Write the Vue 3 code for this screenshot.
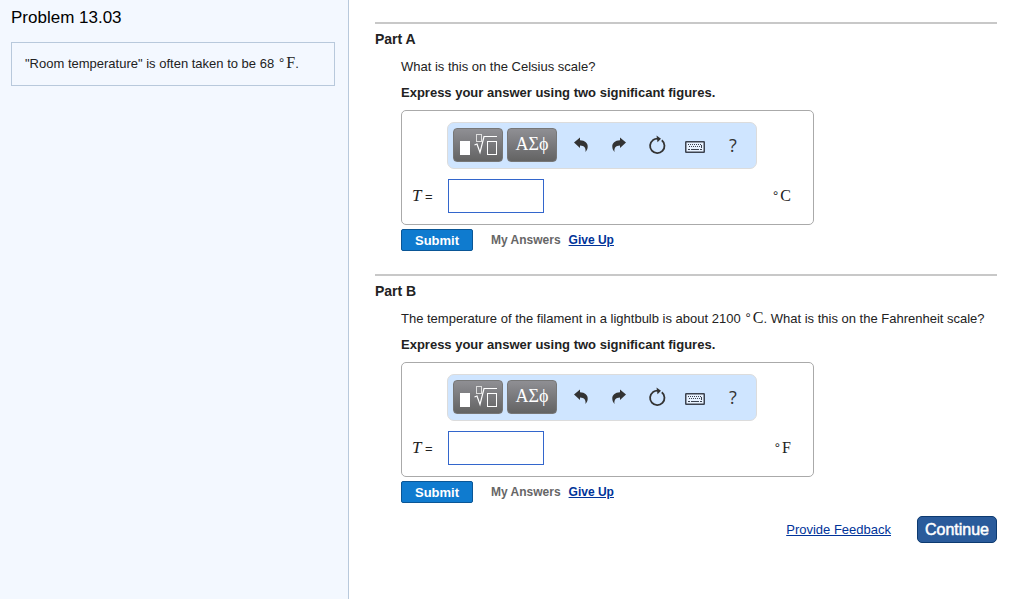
<template>
  <div class="page">
    <aside class="sidebar">
      <h1 class="problem-title">Problem 13.03</h1>
      <div class="problem-text">
        "Room temperature" is often taken to be 68 <span class="unit"><span class="degree">∘</span>F</span>.
      </div>
    </aside>

    <main class="content">
      <section v-for="part in parts" :key="part.id" class="part">
        <h2 class="part-title">Part {{ part.id }}</h2>
        <div class="part-body">
          <p class="question">
            {{ part.before }}
            <span v-if="part.after" class="unit"><span class="degree">∘</span>C</span>{{ part.after }}
          </p>
          <p class="question instruction">Express your answer using two significant figures.</p>

          <form :id="`form-${part.id}`" class="answer-box" @submit.prevent>
            <div class="toolbar">
              <button type="button" class="tool-dark" aria-label="Templates">
                <svg width="38" height="24" viewBox="0 0 38 24">
                  <rect x="1" y="8" width="10" height="14" fill="#fff" />
                  <rect x="17.5" y="1.5" width="5" height="7" fill="none" stroke="#ddd" />
                  <path d="M15.5 12 L18 11 L21 19.5 L25 3.5 H38" fill="none" stroke="#fff" stroke-width="1.2" />
                  <rect x="28.5" y="8.5" width="9" height="13" fill="none" stroke="#fff" />
                </svg>
              </button>
              <button type="button" class="tool-dark symbols" aria-label="Symbols">ΑΣϕ</button>
              <div class="tool-icons">
                <button type="button" class="tool" aria-label="Undo" @click="undo(part)">
                  <svg width="14" height="16" viewBox="0 0 14 16">
                    <path d="M0 5.5 L6 0.5 V3.2 C11 3.4 14 6 13.7 10 C13.5 12 12.8 13.5 11.5 15 C12 11 10.5 8.8 6 8.6 V11 Z" fill="#333" />
                  </svg>
                </button>
                <button type="button" class="tool" aria-label="Redo">
                  <svg width="14" height="16" viewBox="0 0 14 16">
                    <path d="M14 5.5 L8 0.5 V3.2 C3 3.4 0 6 0.3 10 C0.5 12 1.2 13.5 2.5 15 C2 11 3.5 8.8 8 8.6 V11 Z" fill="#333" />
                  </svg>
                </button>
                <button type="button" class="tool" aria-label="Reset" @click="part.answer = ''">
                  <svg width="18" height="20" viewBox="0 0 18 20">
                    <path d="M13.8 5.3 A7.2 7.2 0 1 1 5 5.1 Q7 3.7 9.5 3.7" fill="none" stroke="#333" stroke-width="1.8" />
                    <path d="M8.5 0.5 L13 3.8 L9.5 7.2 Z" fill="#333" />
                  </svg>
                </button>
                <button type="button" class="tool" aria-label="Keyboard">
                  <svg class="keyboard" width="20" height="12" viewBox="0 0 20 12">
                    <rect x="0.75" y="0.75" width="18.5" height="10.5" rx="0.5" fill="#e8f2ff" stroke="#3c4350" stroke-width="1.5" />
                    <path d="M3 3.5 H17 M4 5.5 H15" stroke="#3c4350" stroke-dasharray="1 1" />
                    <path d="M16.5 4 V7 M3 8.5 H5 M6 8.5 H14 M15 8.5 H17" stroke="#3c4350" />
                  </svg>
                </button>
                <button type="button" class="tool help" aria-label="Help">?</button>
              </div>
            </div>

            <div class="answer-row">
              <label class="answer-label" :for="`answer-${part.id}`"><i>T</i> =</label>
              <input :id="`answer-${part.id}`" v-model="part.answer" class="answer-input" type="text" />
              <span class="unit answer-unit"><span class="degree">∘</span>{{ part.unit }}</span>
            </div>
          </form>

          <div class="actions">
            <button type="submit" class="submit" :form="`form-${part.id}`">Submit</button>
            <span class="my-answers">My Answers</span>
            <a href="#" class="link">Give Up</a>
          </div>
        </div>
      </section>

      <footer class="footer">
        <a href="#" class="link">Provide Feedback</a>
        <button type="button" class="continue">Continue</button>
      </footer>
    </main>
  </div>
</template>

<script setup>
import { ref } from 'vue';

const parts = ref([
  {
    id: 'A',
    before: 'What is this on the Celsius scale?',
    after: '',
    unit: 'C',
    answer: '',
  },
  {
    id: 'B',
    before: 'The temperature of the filament in a lightbulb is about 2100',
    after: '. What is this on the Fahrenheit scale?',
    unit: 'F',
    answer: '',
  },
]);

const undo = (part) => {
  part.answer = part.answer.slice(0, -1);
};
</script>

<style>
body {
  margin: 0;
  background: #fff;
}
</style>

<style scoped>
.page {
  display: flex;
  min-height: 100vh;
  font-family: "Liberation Sans", Arial, sans-serif;
  font-size: 13px;
  color: #222;
}

button {
  font-family: inherit;
  cursor: pointer;
}

.sidebar {
  flex: 0 0 324px;
  padding: 8px 13px 0 11px;
  border-right: 1px solid #b8c9dc;
  background: #f3f8ff;
}

.problem-title {
  margin: 0 0 14px;
  font-size: 17px;
  font-weight: normal;
  line-height: 20px;
  color: #000;
}

.problem-text {
  padding: 10px 13px;
  border: 1px solid #b8c9dc;
  line-height: 22px;
}

.unit {
  font-family: "Liberation Serif", "Times New Roman", serif;
  font-size: 16px;
  line-height: 18px;
  white-space: nowrap;
}

.degree {
  margin-right: 1px;
  font-family: "DejaVu Sans", sans-serif;
  font-size: 12px;
  vertical-align: 4px;
  line-height: 1;
}

.content {
  flex: 1;
  min-width: 0;
  padding: 22px 15px 0 26px;
}

.part {
  padding-bottom: 23px;
  border-top: 2px solid #c8c8c8;
}

.part-title {
  margin: 5px 0;
  font-size: 14px;
  line-height: 20px;
}

.part-body {
  padding-left: 26px;
}

.question {
  margin: 0;
  line-height: 26px;
}

.instruction {
  margin-bottom: 4px;
  font-weight: bold;
}

.answer-box {
  width: fit-content;
  box-sizing: border-box;
  padding: 11px 22px 11px 10px;
  border: 1px solid #aaa;
  border-radius: 5px;
}

.toolbar {
  display: flex;
  align-items: center;
  box-sizing: border-box;
  width: 310px;
  height: 47px;
  margin: 0 34px 10px 35px;
  padding: 0 0 2px 5px;
  gap: 4px;
  border: 1px solid #dcdcdc;
  border-radius: 7px;
  background: #cfe5ff;
}

.tool-dark {
  display: flex;
  flex: none;
  align-items: center;
  justify-content: center;
  width: 50px;
  height: 34px;
  padding: 0;
  border: 1px solid #777;
  border-radius: 4px;
  background: linear-gradient(#8f8f94, #636363);
  color: #fff;
}

.symbols {
  font-family: "Liberation Serif", serif;
  font-size: 18px;
}

.tool-icons {
  display: flex;
}

.tool {
  display: flex;
  flex: none;
  align-items: center;
  justify-content: center;
  width: 38px;
  height: 34px;
  padding: 0 0 0 2px;
  border: 0;
  background: none;
  color: #333;
}

.keyboard {
  margin-top: 4px;
}

.help {
  font-family: "Open Sans", sans-serif;
  font-size: 18px;
}

.answer-row {
  display: flex;
  align-items: center;
}

.answer-label {
  width: 36px;
}

.answer-label i {
  font-family: "Liberation Serif", serif;
  font-size: 17px;
}

.answer-input {
  box-sizing: border-box;
  width: 96px;
  height: 34px;
  padding: 0 6px;
  border: 1px solid #3366cc;
  background: #fff;
  font-size: 16px;
}

.answer-unit {
  margin-left: auto;
}

.actions {
  display: flex;
  align-items: center;
  margin-top: 4px;
  font-size: 12px;
  font-weight: bold;
}

.submit {
  width: 72px;
  height: 22px;
  padding: 0;
  border: 1px solid #0a5696;
  border-radius: 2px;
  background: #0f7bcf;
  color: #fff;
  font-size: 13px;
  font-weight: bold;
}

.my-answers {
  margin: 0 8px 0 18px;
  color: #666;
}

.link {
  color: #003399;
}

.footer {
  display: flex;
  align-items: center;
  justify-content: flex-end;
  margin-top: -10px;
  gap: 26px;
}

.continue {
  width: 80px;
  height: 27px;
  padding: 0;
  border: 1px solid #0d3a70;
  border-radius: 5px;
  background: #2a5b9b;
  color: #fff;
  font-size: 16px;
  -webkit-text-stroke: 0.5px #fff;
}
</style>
